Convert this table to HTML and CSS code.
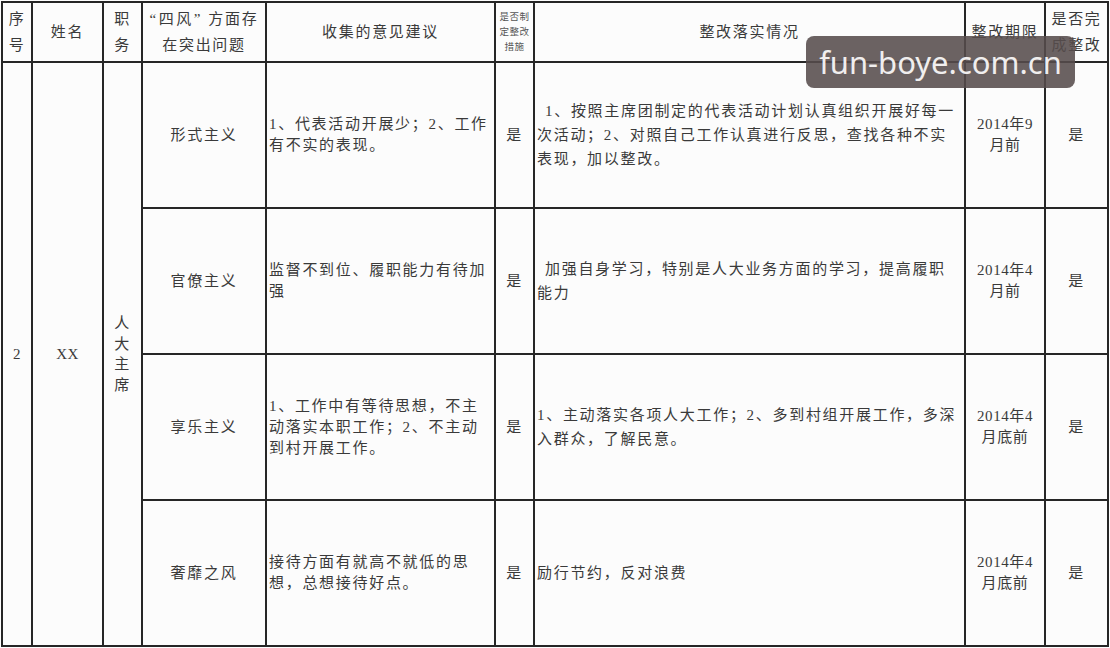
FILE: index.html
```html
<!DOCTYPE html>
<html lang="zh-CN">
<head>
<meta charset="utf-8">
<title>四风问题整改表</title>
<link rel="stylesheet" href="styles.css">
</head>
<body>
<div class="page">
  <div class="sheet">
    <div class="c hd"><div>序<br>号</div></div>
    <div class="c hd"><div>姓名</div></div>
    <div class="c hd"><div>职<br>务</div></div>
    <div class="c hd"><div><span class="q">“四风”</span> 方面存<br>在突出问题</div></div>
    <div class="c hd"><div>收集的意见建议</div></div>
    <div class="c hd tiny"><div>是否制<br>定整改<br>措施</div></div>
    <div class="c hd"><div>整改落实情况</div></div>
    <div class="c hd"><div>整改期限</div></div>
    <div class="c hd"><div>是否完<br>成整改</div></div>

    <div class="c span4 num"><div>2</div></div>
    <div class="c span4 num"><div>XX</div></div>
    <div class="c span4 vert"><div>人<br>大<br>主<br>席</div></div>

    <div class="c"><div>形式主义</div></div>
    <div class="c left"><div>1、代表活动开展少；2、工作<br>有不实的表现。</div></div>
    <div class="c"><div>是</div></div>
    <div class="c left wide"><div><span class="ind">1、按照主席团制定的代表活动计划认真组织开展好每一</span><br>次活动；2、对照自己工作认真进行反思，查找各种不实<br>表现，加以整改。</div></div>
    <div class="c date"><div>2014年9<br>月前</div></div>
    <div class="c"><div>是</div></div>

    <div class="c"><div>官僚主义</div></div>
    <div class="c left"><div>监督不到位、履职能力有待加<br>强</div></div>
    <div class="c"><div>是</div></div>
    <div class="c left wide"><div><span class="ind">加强自身学习，特别是人大业务方面的学习，提高履职</span><br>能力</div></div>
    <div class="c date"><div>2014年4<br>月前</div></div>
    <div class="c"><div>是</div></div>

    <div class="c"><div>享乐主义</div></div>
    <div class="c left"><div>1、工作中有等待思想，不主<br>动落实本职工作；2、不主动<br>到村开展工作。</div></div>
    <div class="c"><div>是</div></div>
    <div class="c left wide"><div>1、主动落实各项人大工作；2、多到村组开展工作，多深<br>入群众，了解民意。</div></div>
    <div class="c date"><div>2014年4<br>月底前</div></div>
    <div class="c"><div>是</div></div>

    <div class="c"><div>奢靡之风</div></div>
    <div class="c left"><div>接待方面有就高不就低的思<br>想，总想接待好点。</div></div>
    <div class="c"><div>是</div></div>
    <div class="c left wide"><div>励行节约，反对浪费</div></div>
    <div class="c date"><div>2014年4<br>月底前</div></div>
    <div class="c"><div>是</div></div>
  </div>
  <div class="mark">fun-boye.com.cn</div>
</div>
</body>
</html>
```

FILE: styles.css
```css
html, body {
  margin: 0;
  padding: 0;
  background: #fdfdfd;
}

.page {
  position: relative;
  width: 1110px;
  height: 648px;
  overflow: hidden;
}

.sheet {
  display: grid;
  grid-template-columns: 28px 69px 37px 122px 227px 37px 429px 78px 61px;
  grid-template-rows: 58px repeat(4, 144px);
  gap: 2px;
  padding: 2px;
  margin: 1px 0 0 1px;
  width: max-content;
  background: #262626;
  font-family: "Liberation Serif", "Noto Sans CJK SC", serif;
  font-size: 15px;
  letter-spacing: 1.7px;
  color: #3a3a3a;
}

.c {
  background: #fcfcfc;
  display: flex;
  align-items: center;
  justify-content: center;
  text-align: center;
  line-height: 21px;
}

.c > div {
  white-space: pre;
}

.hd {
  line-height: 26px;
}

.q {
  letter-spacing: 2.5px;
}

.tiny {
  font-size: 9.5px;
  line-height: 15px;
  letter-spacing: 0.5px;
  color: #555;
}

.left {
  justify-content: flex-start;
  text-align: left;
  padding-left: 2px;
}

.wide {
  line-height: 24px;
}

.ind {
  padding-left: 8px;
}

.span4 {
  grid-row: 2 / span 4;
}

.num {
  letter-spacing: 0.5px;
}

.vert {
  line-height: 20.5px;
}

.date {
  letter-spacing: 0.6px;
}

.mark {
  position: absolute;
  left: 806px;
  top: 36px;
  width: 269px;
  height: 52px;
  border-radius: 8px;
  background: rgba(86, 76, 76, 0.88);
  color: #f0eeee;
  font-family: "Noto Sans", "Open Sans", sans-serif;
  font-size: 31px;
  line-height: 52px;
  text-align: center;
  letter-spacing: 0;
}
```
